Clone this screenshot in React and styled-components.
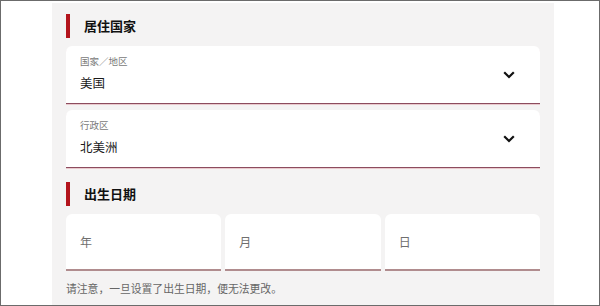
import React from "react";
import styled, { createGlobalStyle } from "styled-components";

const GlobalStyle = createGlobalStyle`
  html, body {
    margin: 0;
    padding: 0;
    background: #ffffff;
  }
  * {
    box-sizing: border-box;
  }
  body {
    font-family: "Noto Sans CJK SC", "Noto Sans", sans-serif;
  }
`;

const Frame = styled.div`
  width: 600px;
  height: 306px;
  border: 1px solid #6b6b6b;
  background: #ffffff;
  padding: 2px 0 0 51px;
  overflow: hidden;
`;

const Panel = styled.div`
  width: 502px;
  height: 100%;
  background: #f4f3f3;
  padding: 11px 14px 0;
  display: flex;
  flex-direction: column;
`;

const SectionHeader = styled.div`
  display: flex;
  align-items: center;
  gap: 14px;
  height: 24px;
  margin-top: ${({ $top }) => $top || 0}px;
  margin-bottom: 8px;
`;

const Bar = styled.span`
  width: 4px;
  height: 24px;
  background: #b3141c;
`;

const Title = styled.h2`
  margin: 0;
  font-size: 13px;
  font-weight: 700;
  color: #111111;
  line-height: 24px;
`;

const Stack = styled.div`
  display: flex;
  flex-direction: column;
  gap: 6px;
`;

const Select = styled.div`
  height: 58px;
  background: #ffffff;
  border-radius: 6px 6px 0 0;
  border-bottom: 1px solid #8c4c5e;
  box-shadow: 0 1px 0 #e9c9cd;
  padding: 9px 25px 0 14px;
  display: flex;
  justify-content: space-between;
`;

const Field = styled.div`
  display: flex;
  flex-direction: column;
`;

const Label = styled.span`
  font-size: 9.5px;
  line-height: 12px;
  color: #7a7a7a;
`;

const Value = styled.span`
  margin-top: 7px;
  font-size: 12.5px;
  line-height: 18px;
  color: #1a1a1a;
`;

const Chevron = styled.svg`
  align-self: center;
  margin-top: -9px;
  width: 12px;
  height: 8px;
`;

const DateRow = styled.div`
  display: grid;
  grid-template-columns: repeat(3, 1fr);
  gap: 4px;
`;

const DateBox = styled.div`
  height: 57px;
  background: #ffffff;
  border-radius: 6px 6px 0 0;
  border-bottom: 2px solid #b08c8e;
  padding: 0 14px;
  display: flex;
  align-items: center;
  font-size: 12px;
  color: #6f6f6f;
`;

const Note = styled.p`
  margin: 9px 0 0;
  font-size: 10.8px;
  line-height: 16px;
  color: #666666;
`;

const selects = [
  { label: "国家／地区", value: "美国" },
  { label: "行政区", value: "北美洲" },
];

const dateParts = ["年", "月", "日"];

function App() {
  return (
    <>
      <GlobalStyle />
      <Frame>
        <Panel>
          <SectionHeader>
            <Bar />
            <Title>居住国家</Title>
          </SectionHeader>
          <Stack>
            {selects.map((s) => (
              <Select key={s.label}>
                <Field>
                  <Label>{s.label}</Label>
                  <Value>{s.value}</Value>
                </Field>
                <Chevron viewBox="0 0 12 8">
                  <polyline
                    points="1.2,1.2 6,6 10.8,1.2"
                    fill="none"
                    stroke="#111"
                    strokeWidth="2.2"
                  />
                </Chevron>
              </Select>
            ))}
          </Stack>
          <SectionHeader $top={14}>
            <Bar />
            <Title>出生日期</Title>
          </SectionHeader>
          <DateRow>
            {dateParts.map((d) => (
              <DateBox key={d}>{d}</DateBox>
            ))}
          </DateRow>
          <Note>请注意，一旦设置了出生日期，便无法更改。</Note>
        </Panel>
      </Frame>
    </>
  );
}

export default App;
